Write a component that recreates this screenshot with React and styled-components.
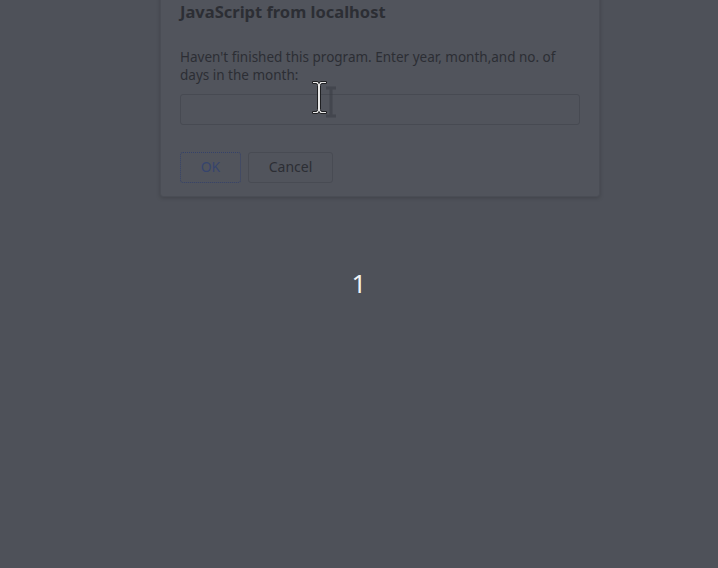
import React from 'react';
import styled, { createGlobalStyle } from 'styled-components';

const GlobalStyle = createGlobalStyle`
  html, body {
    margin: 0;
    padding: 0;
    height: 100%;
    background: #4e5159;
  }
  #root {
    height: 100%;
  }
`;

const Page = styled.div`
  position: relative;
  height: 568px;
  display: flex;
  align-items: center;
  justify-content: center;
  background: #4e5159;
  font-family: 'Noto Sans', 'Open Sans', sans-serif;
  overflow: hidden;
`;

const Counter = styled.div`
  font-size: 26px;
  color: #f2f3f5;
  line-height: 1;
  margin: -2px 0 0 0;
`;

const Dialog = styled.div`
  position: absolute;
  top: -20px;
  left: 160px;
  width: 440px;
  box-sizing: border-box;
  padding: 20px 19px 13px 19px;
  background: #51545c;
  border: 1px solid #4a4d55;
  border-radius: 0 0 3px 3px;
  box-shadow: 0 1px 4px rgba(0, 0, 0, 0.18);
  color: #2c2e34;
`;

const Title = styled.h2`
  margin: 0;
  font-size: 16.5px;
  font-weight: 700;
  line-height: 22px;
`;

const Message = styled.p`
  margin: 25px 0 0;
  font-size: 13.5px;
  line-height: 18px;
`;

const Field = styled.div`
  margin-top: 10px;
  height: 31px;
  border: 1px solid #474a52;
  border-radius: 3px;
  box-sizing: border-box;
`;

const Actions = styled.div`
  display: flex;
  gap: 7px;
  margin-top: 27px;
`;

const Button = styled.button`
  height: 31px;
  padding: 0 0 2px;
  width: ${p => (p.$primary ? '61px' : '85px')};
  box-sizing: border-box;
  background: #51545c;
  border: 1px ${p => (p.$primary ? 'dotted #34416a' : 'solid #484b53')};
  border-radius: 3px;
  font-family: inherit;
  font-size: 14px;
  color: ${p => (p.$primary ? '#36446d' : '#2c2e34')};
  outline: none;
`;

const Cursor = styled.svg`
  position: absolute;
  left: 311px;
  top: 80px;
`;

export default function App() {
  return (
    <>
      <GlobalStyle />
      <Page>
        <Counter>1</Counter>
        <Dialog>
          <Title>JavaScript from localhost</Title>
          <Message>Haven't finished this program. Enter year, month,and no. of days in the month:</Message>
          <Field />
          <Actions>
            <Button $primary>OK</Button>
            <Button>Cancel</Button>
          </Actions>
        </Dialog>
        <Cursor width="34" height="44" viewBox="0 0 34 44">
          <path d="M15 8 H25 M20 8 V36 M15 36 H25" stroke="#3b3d44" strokeWidth="3" opacity="0.6" fill="none" />
          <path d="M1.5 1.5 H6 Q8 1.5 8 3.5 Q8 1.5 10 1.5 H15.5 V3.5 H11 Q9.5 3.5 9.5 5.5 V29.5 Q9.5 31.5 11 31.5 H15.5 V33.5 H10 Q8 33.5 8 31.5 Q8 33.5 6 33.5 H1.5 V31.5 H5 Q6.5 31.5 6.5 29.5 V5.5 Q6.5 3.5 5 3.5 H1.5 Z" fill="#e6e6e6" stroke="#1e1f22" strokeWidth="1" />
        </Cursor>
      </Page>
    </>
  );
}
